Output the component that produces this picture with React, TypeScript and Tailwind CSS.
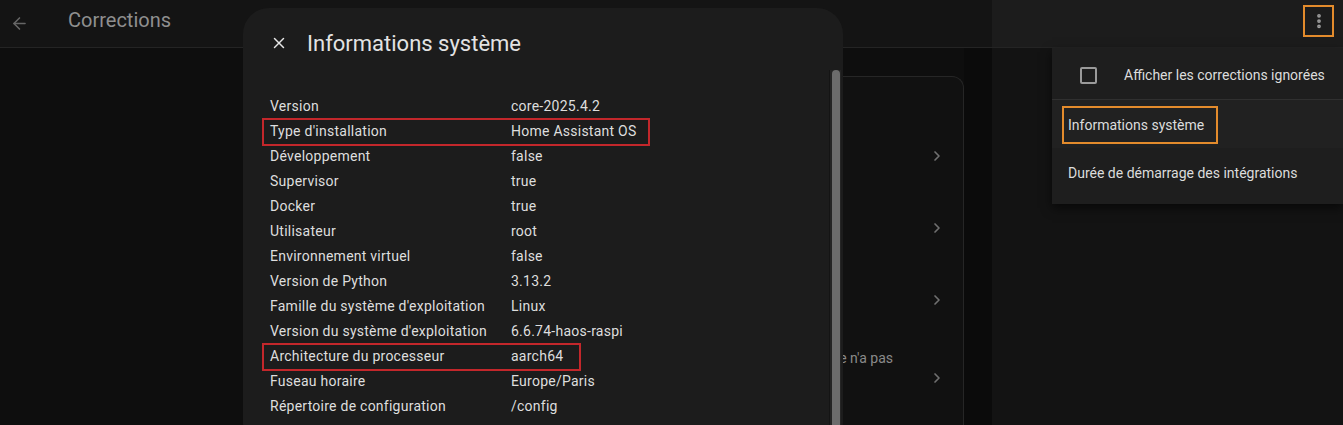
import { X, ArrowLeft, ChevronRight, MoreVertical } from "lucide-react";

const rows: [string, string][] = [
    ["Version", "core-2025.4.2"],
    ["Type d'installation", "Home Assistant OS"],
    ["Développement", "false"],
    ["Supervisor", "true"],
    ["Docker", "true"],
    ["Utilisateur", "root"],
    ["Environnement virtuel", "false"],
    ["Version de Python", "3.13.2"],
    ["Famille du système d'exploitation", "Linux"],
    ["Version du système d'exploitation", "6.6.74-haos-raspi"],
    ["Architecture du processeur", "aarch64"],
    ["Fuseau horaire", "Europe/Paris"],
    ["Répertoire de configuration", "/config"],
];

// rows framed in red in the screenshot, with the frame width
const boxed: Record<string, string> = {
    "Type d'installation": "w-[388px]",
    "Architecture du processeur": "w-[319px]",
};

export default function App() {
    return (
        <div className="relative w-[1343px] h-[425px] overflow-hidden bg-[#0e0e0e] font-['Roboto',sans-serif]">
            {/* Header */}
            <header className="flex h-[48px] border-b border-[#242424]">
                <div className="w-[992px] bg-[#141414] flex items-center">
                    <ArrowLeft className="ml-[10px] w-[19px] h-[19px] text-[#666666]" strokeWidth={2}/>
                    <span className="ml-[39px] text-[20px] text-[#8f8f8f] -mt-[8px]">Corrections</span>
                </div>
                <div className="flex-1 bg-[#1c1c1c] flex justify-end items-start pt-[5px] pr-[9px]">
                    <div className="w-[31px] h-[32px] border-2 border-[#e38b2c] flex items-center justify-center">
                        <MoreVertical className="w-[18px] h-[18px] text-[#9e9e9e]" strokeWidth={3}/>
                    </div>
                </div>
            </header>

            {/* Page content behind the dialog */}
            <div className="flex h-[377px]">
                <div className="w-[964px] pt-[28px] pl-[250px]">
                    <div className="h-full rounded-t-[12px] border border-b-0 border-[#262626] bg-[#111111] flex flex-col">
                        <div className="h-[16px] mt-[71px] flex justify-end pr-[18px]">
                            <ChevronRight className="w-[16px] h-[16px] text-[#707070]" strokeWidth={2.5}/>
                        </div>
                        <div className="h-[16px] mt-[56px] flex justify-end pr-[18px]">
                            <ChevronRight className="w-[16px] h-[16px] text-[#707070]" strokeWidth={2.5}/>
                        </div>
                        <div className="h-[16px] mt-[56px] flex justify-end pr-[18px]">
                            <ChevronRight className="w-[16px] h-[16px] text-[#707070]" strokeWidth={2.5}/>
                        </div>
                        <div className="h-[20px] mt-[40px] flex justify-end pr-[70px]">
                            <span className="text-[14px] leading-[20px] text-[#8a8a8a]">l’intégration ne n'a pas</span>
                        </div>
                        <div className="h-[16px] mt-[2px] flex justify-end pr-[18px]">
                            <ChevronRight className="w-[16px] h-[16px] text-[#707070]" strokeWidth={2.5}/>
                        </div>
                    </div>
                </div>
                <div className="w-[28px] bg-[#0b0b0b]"/>
                <div className="flex-1 bg-[#131313]"/>
            </div>

            {/* Dialog */}
            <div className="absolute left-[243px] top-[8px] w-[600px] h-[440px] rounded-[26px] bg-[#1c1c1c]">
                <div className="flex items-center h-[48px] mt-[11px] pl-[27px]">
                    <X className="w-[18px] h-[18px] text-[#e6e6e6]" strokeWidth={2}/>
                    <h2 className="ml-[19px] text-[22px] text-[#e3e3e3]">Informations système</h2>
                </div>
                <div className="mt-[27px] pl-[27px] text-[14px] text-[#dedede] tracking-[0.25px]">
                    {rows.map(([k, v]) => (
                        <div key={k} className="relative flex h-[25px] items-center">
                            <span className="w-[241px]">{k}</span>
                            <span>{v}</span>
                            {boxed[k] && (
                                <div className={`absolute -left-[8px] -top-[1.5px] h-[28px] border-2 border-[#c3272b] ${boxed[k]}`}/>
                            )}
                        </div>
                    ))}
                </div>
                {/* scrollbar */}
                <div className="absolute right-[2px] top-[62px] bottom-0 w-[12px] bg-[#252525] border-l border-[#141414]">
                    <div className="ml-[2px] w-[8px] h-full rounded-t-full bg-[#6c6c6c]"/>
                </div>
            </div>

            {/* Overflow menu */}
            <div className="absolute left-[1052px] top-[48px] w-[291px] h-[156px] bg-[#1e1e1e] shadow-[0_4px_10px_rgba(0,0,0,0.6)] text-[14px] text-[#dcdcdc]">
                <div className="flex items-center h-[52px] pt-[4px] border-b border-[#303030]">
                    <div className="ml-[28px] w-[17px] h-[17px] border-2 border-[#9a9a9a] rounded-[2px]"/>
                    <span className="ml-[27px]">Afficher les corrections ignorées</span>
                </div>
                <div className="flex items-center h-[48px] pt-[2px] pl-[10px] bg-[#212121]">
                    <span className="w-[156px] px-[4px] h-[38px] flex items-center border-2 border-[#e38b2c]">Informations système</span>
                </div>
                <div className="flex items-center h-[48px] pt-[2px] pl-[16px]">
                    <span>Durée de démarrage des intégrations</span>
                </div>
            </div>
        </div>
    );
}
